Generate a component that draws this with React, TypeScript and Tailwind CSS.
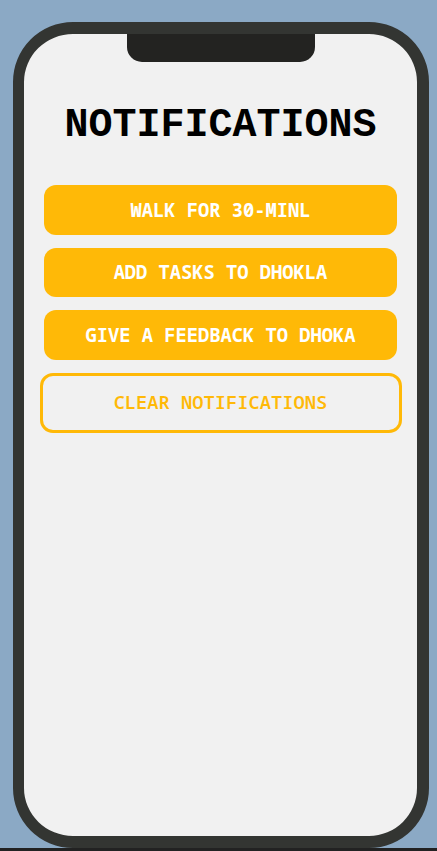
import React from 'react';

const items = ['WALK FOR 30-MINL', 'ADD TASKS TO DHOKLA', 'GIVE A FEEDBACK TO DHOKA'];

export default function App() {
  return (
    <div className="flex h-[851px] w-full flex-col bg-[#8ba9c5]">
      <div className="flex-1 pl-[13px] pt-[22px]">
        {/* phone frame */}
        <div className="relative h-[826px] w-[416px] rounded-[60px] border-y-[12px] border-l-[11px] border-r-[12px] border-[#333532] bg-[#f1f1f1]">
          <div className="absolute left-1/2 top-0 h-[28px] w-[188px] -translate-x-1/2 rounded-b-[15px] bg-[#232321]" />

          <div className="flex flex-col items-center pt-[72px]">
            <h1 className="font-['Liberation_Mono',monospace] text-[40px] font-bold leading-none text-black">
              NOTIFICATIONS
            </h1>

            <div className="mt-[39px] flex flex-col items-center gap-[13px] font-['Noto_Sans_Mono',monospace]">
              {items.map((t) => (
                <button
                  key={t}
                  className="flex h-[49.5px] w-[353px] items-center justify-center rounded-[12px] bg-[#ffb907] text-[18.75px] font-bold text-white"
                >
                  {t}
                </button>
              ))}
              <button className="flex h-[60px] w-[362px] items-center justify-center rounded-[13px] border-[3px] border-[#ffb907] text-[18.75px] font-semibold text-[#ffb907]">
                CLEAR NOTIFICATIONS
              </button>
            </div>
          </div>
        </div>
      </div>
      <div className="h-[3px] w-full bg-[#222222]" />
    </div>
  );
}
